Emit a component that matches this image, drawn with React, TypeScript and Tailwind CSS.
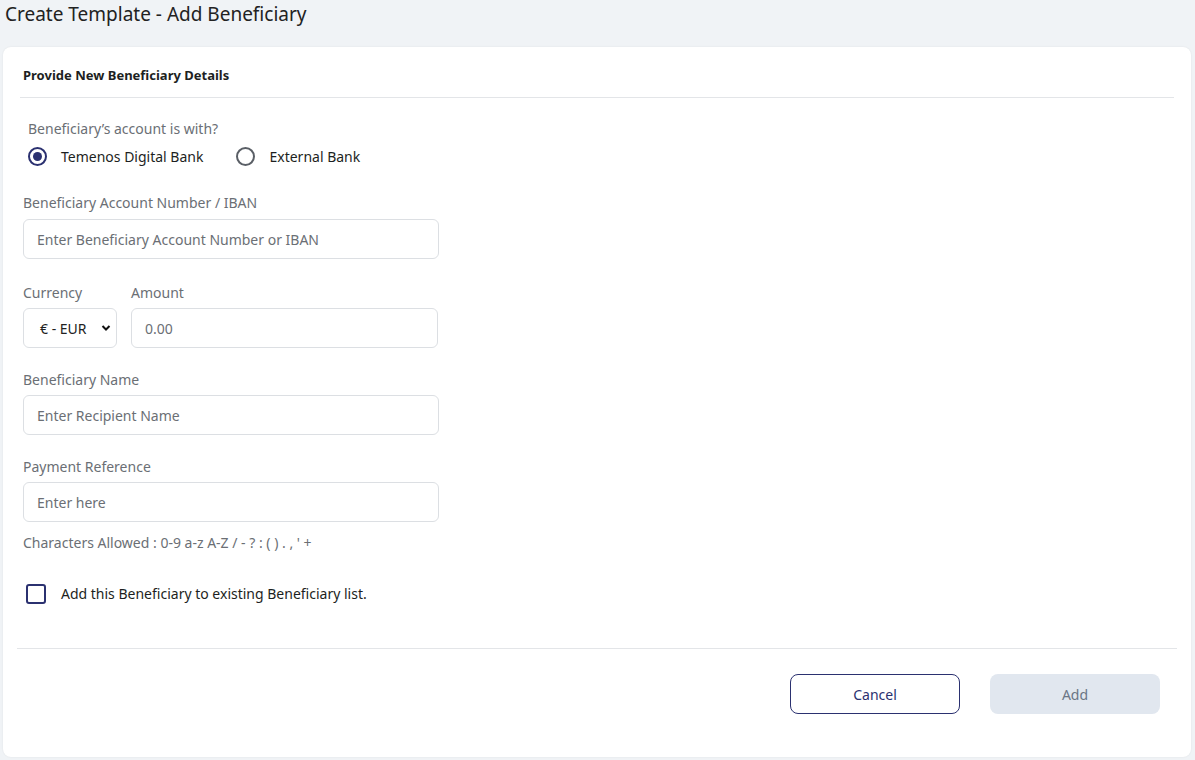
export default function App() {
  const label = 'text-[14px] text-[#6b6f75] leading-none'
  const input =
    'h-10 w-[416px] rounded-md border border-[#dcdfe3] px-[13px] text-[14px] text-[#6b6f75] flex items-center'
  return (
    <div className="h-[760px] w-[1195px] bg-[#f0f3f6] font-['Lato',sans-serif] text-[#1d1f22]">
      <h1 className="px-[5px] pt-[3px] text-[19px] leading-[22px] text-[#222]">Create Template - Add Beneficiary</h1>
      <div className="ml-[3px] mt-[22px] h-[710px] w-[1188px] rounded-lg bg-white shadow-[0_0_2px_rgba(0,0,0,0.08)]">
        <div className="mx-[17px] border-b border-[#e3e5e8] pl-[3px] pt-[20px] pb-[14px] text-[13px] font-bold leading-4">
          Provide New Beneficiary Details
        </div>
        <div className="pl-[20px]">
          <div className={label + ' mt-[24px] pl-[5px]'}>Beneficiary’s account is with?</div>
          <div className="mt-[10px] flex items-center pl-[5px] text-[14px]">
            <span className="flex h-[19px] w-[19px] items-center justify-center rounded-full border-2 border-[#2b3170]">
              <span className="h-[9px] w-[9px] rounded-full bg-[#2b3170]" />
            </span>
            <span className="ml-[14px]">Temenos Digital Bank</span>
            <span className="ml-[33px] h-[19px] w-[19px] rounded-full border-2 border-[#5a5f66]" />
            <span className="ml-[14px]">External Bank</span>
          </div>
          <div className={label + ' mt-[29px]'}>Beneficiary Account Number / IBAN</div>
          <div className={input + ' mt-[9px]'}>Enter Beneficiary Account Number or IBAN</div>
          <div className="mt-[27px] flex gap-[14px]">
            <div>
              <div className={label}>Currency</div>
              <div className="mt-[8px] flex h-10 w-[94px] items-center justify-between rounded-md border border-[#dcdfe3] pl-[16px] pr-[5px] text-[14px] text-[#222]">
                € - EUR
                <svg width="10" height="8" viewBox="0 0 10 8"><path d="M1.5 2l3.5 3.5L8.5 2" fill="none" stroke="#111" strokeWidth="2" /></svg>
              </div>
            </div>
            <div>
              <div className={label}>Amount</div>
              <div className="mt-[8px] flex h-10 w-[307px] items-center rounded-md border border-[#dcdfe3] px-[13px] text-[14px] text-[#6b6f75]">0.00</div>
            </div>
          </div>
          <div className={label + ' mt-[25px]'}>Beneficiary Name</div>
          <div className={input + ' mt-[8px]'}>Enter Recipient Name</div>
          <div className={label + ' mt-[25px]'}>Payment Reference</div>
          <div className={input + ' mt-[8px]'}>Enter here</div>
          <div className={label + ' mt-[14px] text-[13px]'}>Characters Allowed : 0-9 a-z A-Z / - ? : ( ) . , ' +</div>
          <div className="mt-[33px] flex items-center pl-[3px] text-[14px]">
            <span className="h-[20px] w-[20px] rounded-[3px] border-2 border-[#2b3170]" />
            <span className="ml-[15px]">Add this Beneficiary to existing Beneficiary list.</span>
          </div>
        </div>
        <div className="mx-[14px] mt-[44px] border-t border-[#e3e5e8]" />
        <div className="mt-[25px] flex justify-end gap-[30px] pr-[31px]">
          <button className="h-10 w-[170px] rounded-lg border border-[#2b3170] text-[14px] text-[#2b3170]">Cancel</button>
          <button className="h-10 w-[170px] rounded-lg bg-[#e1e7ef] text-[14px] text-[#6b7685]">Add</button>
        </div>
      </div>
    </div>
  )
}
